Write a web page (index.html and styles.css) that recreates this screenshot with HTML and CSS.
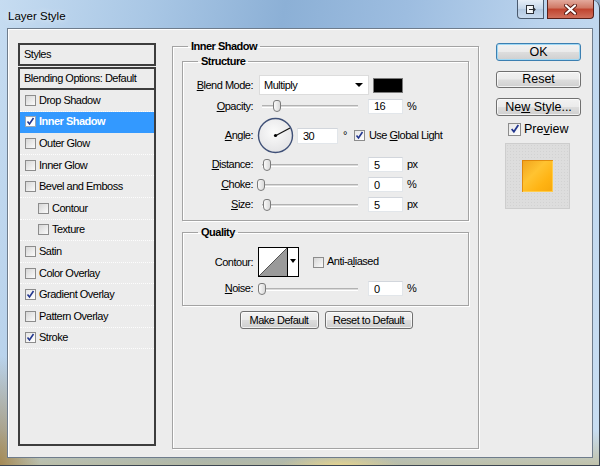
FILE: index.html
```html
<!DOCTYPE html>
<html>
<head>
<meta charset="utf-8">
<link rel="stylesheet" href="styles.css">
</head>
<body>
<div class="window">
    <div class="titlebar">
        <span class="title">Layer Style</span>
        <div class="caption">
            <span class="cap-btn cap-extra">
                <svg width="12" height="11" viewBox="0 0 12 11"><rect x="1.5" y="1.5" width="7" height="8" fill="#f4f6f8" stroke="#2b2f36"/><path d="M4 5.5h6M8 3.5l2 2-2 2" fill="none" stroke="#2b2f36" stroke-width="1.2"/></svg>
            </span>
            <span class="cap-btn cap-close">
                <svg width="13" height="11" viewBox="0 0 13 11"><path d="M2 1.5l9 8M11 1.5l-9 8" stroke="#5a1a12" stroke-width="4" stroke-linecap="round"/><path d="M2 1.5l9 8M11 1.5l-9 8" stroke="#fff" stroke-width="2.2" stroke-linecap="round"/></svg>
            </span>
        </div>
    </div>
    <div class="client">
        <div class="styles-panel">
            <div class="panel-head">Styles</div>
            <div class="panel-blend">Blending Options: Default</div>
            <ul class="style-list">
                <li><span class="cb"></span>Drop Shadow</li>
                <li class="z-selected"><span class="cb on"><svg width="9" height="9" viewBox="0 0 9 9"><path d="M1.5 4.5l2 2.5 4-6" fill="none" stroke="#23378f" stroke-width="1.6"/></svg></span>Inner Shadow</li>
                <li><span class="cb"></span>Outer Glow</li>
                <li><span class="cb"></span>Inner Glow</li>
                <li><span class="cb"></span>Bevel and Emboss</li>
                <li class="sub"><span class="cb"></span>Contour</li>
                <li class="sub"><span class="cb"></span>Texture</li>
                <li><span class="cb"></span>Satin</li>
                <li><span class="cb"></span>Color Overlay</li>
                <li><span class="cb on"><svg width="9" height="9" viewBox="0 0 9 9"><path d="M1.5 4.5l2 2.5 4-6" fill="none" stroke="#23378f" stroke-width="1.6"/></svg></span>Gradient Overlay</li>
                <li><span class="cb"></span>Pattern Overlay</li>
                <li><span class="cb on"><svg width="9" height="9" viewBox="0 0 9 9"><path d="M1.5 4.5l2 2.5 4-6" fill="none" stroke="#23378f" stroke-width="1.6"/></svg></span>Stroke</li>
            </ul>
        </div>

        <fieldset class="group g-main">
            <legend>Inner Shadow</legend>

            <fieldset class="group g-sub g-structure">
                <legend>Structure</legend>
                <div class="row row-blend">
                    <label class="lbl"><u>B</u>lend Mode:</label>
                    <div class="select">Multiply<span class="arrow"></span></div>
                    <span class="swatch"></span>
                </div>
                <div class="row">
                    <label class="lbl"><u>O</u>pacity:</label>
                    <div class="slider"><span class="track"></span><span class="thumb" style="left:16px"></span></div>
                    <input class="num" type="text" value="16">
                    <span class="unit">%</span>
                </div>
                <div class="row row-angle">
                    <label class="lbl"><u>A</u>ngle:</label>
                    <svg class="dial" width="37" height="37" viewBox="0 0 37 37">
                        <defs><radialGradient id="dialFill" cx="45%" cy="40%" r="60%"><stop offset="0" stop-color="#fbfbfb"/><stop offset="1" stop-color="#e4e4e6"/></radialGradient></defs>
                        <circle cx="18.5" cy="18.5" r="17" fill="url(#dialFill)" stroke="#3f5077" stroke-width="1.4"/>
                        <line x1="19" y1="18.5" x2="33" y2="11" stroke="#111" stroke-width="1.2"/>
                        <circle cx="18.5" cy="18.5" r="1.6" fill="#000"/>
                    </svg>
                    <input class="num num-angle" type="text" value="30">
                    <span class="deg">°</span>
                    <span class="cb on cb-global"><svg width="9" height="9" viewBox="0 0 9 9"><path d="M1.5 4.5l2 2.5 4-6" fill="none" stroke="#23378f" stroke-width="1.6"/></svg></span>
                    <span class="cb-text">Use <u>G</u>lobal Light</span>
                </div>
                <div class="row">
                    <label class="lbl"><u>D</u>istance:</label>
                    <div class="slider"><span class="track"></span><span class="thumb" style="left:6px"></span></div>
                    <input class="num" type="text" value="5">
                    <span class="unit">px</span>
                </div>
                <div class="row">
                    <label class="lbl"><u>C</u>hoke:</label>
                    <div class="slider"><span class="track"></span><span class="thumb" style="left:0px"></span></div>
                    <input class="num" type="text" value="0">
                    <span class="unit">%</span>
                </div>
                <div class="row">
                    <label class="lbl"><u>S</u>ize:</label>
                    <div class="slider"><span class="track"></span><span class="thumb" style="left:6px"></span></div>
                    <input class="num" type="text" value="5">
                    <span class="unit">px</span>
                </div>
            </fieldset>

            <fieldset class="group g-sub g-quality">
                <legend>Quality</legend>
                <div class="row row-contour">
                    <label class="lbl">Contour:</label>
                    <div class="contour">
                        <svg width="28" height="28" viewBox="0 0 28 28"><rect width="28" height="28" fill="#fff"/><path d="M0 28L28 0V28Z" fill="#9a9a9a"/><path d="M0 28L28 0" stroke="#555" stroke-width="1"/></svg>
                        <span class="contour-drop"><span class="arrow"></span></span>
                    </div>
                    <span class="cb cb-aa"></span>
                    <span class="cb-text">Anti-a<u>l</u>iased</span>
                </div>
                <div class="row row-noise">
                    <label class="lbl"><u>N</u>oise:</label>
                    <div class="slider"><span class="track"></span><span class="thumb" style="left:1px"></span></div>
                    <input class="num" type="text" value="0">
                    <span class="unit">%</span>
                </div>
            </fieldset>

            <div class="defaults">
                <button class="btn btn-small">Make Default</button>
                <button class="btn btn-small">Reset to Default</button>
            </div>
        </fieldset>

        <div class="actions">
            <button class="btn btn-main z-focus">OK</button>
            <button class="btn btn-main btn-reset">Reset</button>
            <button class="btn btn-main">Ne<u>w</u> Style...</button>
            <div class="preview-row">
                <span class="cb on cb-preview"><svg width="10" height="10" viewBox="0 0 9 9"><path d="M1.5 4.5l2 2.5 4-6" fill="none" stroke="#23378f" stroke-width="1.6"/></svg></span>
                <span>Pre<u>v</u>iew</span>
            </div>
            <div class="preview-box"><span class="preview-chip"></span></div>
        </div>
    </div>
</div>
</body>
</html>
```

FILE: styles.css
```css
body {margin: 0; background: #8aa8c8; font: 11px/13px "Liberation Sans", Arial, sans-serif; letter-spacing: -0.5px; color: #000;}
u {text-decoration: underline;}

/* window frame */
.window {box-sizing: border-box; width: 600px; height: 466px; padding: 0 6px 7px 7px; display: flex; flex-direction: column;
    border-right: 1px solid #3d4652; border-bottom: 1px solid #3d4652; border-top-right-radius: 8px;
    background:
        radial-gradient(ellipse 40px 110px at 0 466px, rgba(160,128,70,.85), rgba(160,128,70,0)),
        radial-gradient(ellipse 60px 12px at 340px 466px, rgba(235,215,140,.9), rgba(235,215,140,0)),
        linear-gradient(to bottom, rgba(200,196,160,0) 430px, rgba(190,186,150,.8) 466px),
        linear-gradient(100deg, #c6dcf1 0%, #a9c7e5 22%, #8cb0d6 42%, #9dbde0 60%, #bad3ed 80%, #c9def2 100%);}
.titlebar {height: 28px; display: flex; align-items: flex-start; flex: none;}
.title {padding: 9px 0 0 1px; font-size: 11.5px; line-height: 14px; letter-spacing: 0; text-shadow: 0 0 6px rgba(255,255,255,.9);}
.caption {margin-left: auto; margin-right: -1px; display: flex; gap: 3px;}
.cap-btn {box-sizing: border-box; height: 19px; display: flex; align-items: center; justify-content: center; border: 1px solid #4a5a6e; border-top: 0;}
.cap-extra {width: 27px; border-radius: 0 0 0 4px; background: linear-gradient(#e6eef7, #c4d6ea 50%, #b2c8e0 51%, #c8daee);}
.cap-close {width: 47px; border-color: #5a1f18; border-radius: 0 0 4px 0; background: linear-gradient(#e3a99c, #cf7764 45%, #c0432e 50%, #d0705c 100%);}

.client {flex: 1; display: flex; align-items: flex-start; padding: 14px 0 0 10px; background: #ececec; border: 1px solid #6e7c8c; box-shadow: inset 1px 1px 0 #fff;}

/* left list */
.styles-panel {width: 138px; flex: none; display: flex; flex-direction: column;}
.panel-head, .panel-blend {box-sizing: border-box; height: 23px; border: 2px solid #3d3d3d; padding-left: 4px; line-height: 19px;}
.panel-blend {margin-top: 1px;}
.style-list {box-sizing: border-box; height: 356px; margin: 0; padding: 0; list-style: none; border: 2px solid #3d3d3d; border-top: 0;}
.style-list > li {box-sizing: border-box; height: 21.6px; display: flex; align-items: center; padding-left: 5px; border-bottom: 1px dotted #fdfdfd;}
.style-list > li.sub {padding-left: 18px;}
.style-list > li.z-selected {background: #3399ff; color: #fff; font-weight: bold; border-bottom-color: #3399ff;}
.style-list .cb {margin-right: 3px;}

.cb {box-sizing: border-box; width: 11px; height: 11px; flex: none; display: inline-flex; align-items: center; justify-content: center; border: 1px solid #8c8c8c; background: linear-gradient(135deg, #d6d6d6, #fbfbfb);}
.cb.on {background: linear-gradient(135deg, #e6e6e6, #ffffff);}
.z-selected .cb {background: #fff; border-color: #9aa6b5;}

/* group boxes */
.group {box-sizing: border-box; margin: 0; min-width: 0; border: 1px solid #a3a3a3; box-shadow: 1px 1px 0 #fff, inset 1px 1px 0 #fff;}
.group > legend {padding: 0 3px; font-weight: bold; line-height: 13px;}
.g-main {width: 307px; height: 409px; margin: -3.5px 0 0 16px; padding: 2px 9px 0 9px; flex: none;}
.g-main > legend {margin-left: 6px;}
.g-sub {width: 287px; padding: 7px 0 5px 0;}
.g-sub > legend {margin-left: 15px;}
.g-quality {margin-top: 5px; padding: 8.5px 0 6px 0;}

.row {display: flex; align-items: center; height: 20px;}
.row-blend {height: 21px;}
.row:nth-of-type(2) {height: 21px;}
.row-angle {height: 38px;}
.row-contour {height: 30px;}
.row-noise {margin-top: 1px;}
.lbl {width: 70px; flex: none; text-align: right;}

.select {box-sizing: border-box; width: 110px; height: 20px; margin-left: 6px; display: flex; align-items: center; padding-left: 4px; background: #fff; border: 1px solid #dcdcdc;}
.arrow {width: 0; height: 0; border-left: 4px solid transparent; border-right: 4px solid transparent; border-top: 4px solid #000;}
.select .arrow {margin-left: auto; margin-right: 5px;}
.swatch {box-sizing: border-box; width: 30px; height: 15px; margin-left: 4px; background: #000; border: 1px solid #7a7a7a;}

.slider {position: relative; width: 101px; height: 14px; margin-left: 4px; flex: none;}
.slider .track {position: absolute; left: 5px; right: 0; top: 6px; height: 1px; background: #dadada; border-top: 1px solid #b2b2b2; border-bottom: 1px solid #fff;}
.slider .thumb {position: absolute; top: 1px; box-sizing: border-box; width: 8px; height: 12px; border: 1px solid #7b7b7b; border-radius: 3px 3px 4px 4px; background: linear-gradient(90deg, #fafafa, #d9d9d9);}

.num {box-sizing: border-box; width: 35px; height: 15px; margin: 0 0 0 10px; padding: 0 0 0 5px; font: inherit; letter-spacing: inherit; color: #000; background: #fff; border: 1px solid #e2e6ea; border-top-color: #d2d6dc; outline: none;}
.unit {margin-left: 4px;}

.dial {margin-left: 4px; flex: none;}
.num-angle {width: 41px; height: 16px; margin-left: 3px;}
.deg {margin-left: 5px; align-self: flex-start; margin-top: 12px;}
.cb-global {margin-left: 7px;}
.cb-text {margin-left: 4px;}

.contour {box-sizing: border-box; width: 41px; height: 30px; margin-left: 5px; display: flex; border: 1px solid #000; background: #fff;}
.contour svg {display: block;}
.contour-drop {flex: 1; display: flex; align-items: center; justify-content: center; border-left: 1px solid #000;}
.contour-drop .arrow {border-width: 4px 3px 0 3px; margin-top: -2px;}
.cb-aa {margin-left: 14px;}
.row-contour .cb-text {margin-left: 3px; margin-top: -2px;}

/* buttons */
.btn {box-sizing: border-box; margin: 0; padding: 0; font: inherit; letter-spacing: inherit; color: #000; border: 1px solid #707070; border-radius: 3px;
    background: linear-gradient(#f2f2f2 0%, #ebebeb 48%, #dddddd 52%, #cfcfcf 100%); box-shadow: inset 0 0 0 1px rgba(255,255,255,.7);}
.defaults {display: flex; justify-content: center; gap: 6px; margin-top: 5px; padding-left: 1px;}
.btn-small {height: 18px;}
.btn-small:first-child {width: 79px;}
.btn-small:last-child {width: 88px;}

.actions {width: 85px; margin-left: 17px; flex: none; display: flex; flex-direction: column; font-size: 12.5px; line-height: 15px; letter-spacing: 0;}
.btn-main {height: 18px; font-size: 12.5px;}
.btn-main + .btn-main {margin-top: 10px;}
.btn-reset {height: 17px;}
.z-focus {border-color: #3c7fb1; box-shadow: inset 0 0 0 1px #9fd8f4;}
.preview-row {display: flex; align-items: center; height: 18px; margin-top: 4px; padding-left: 12px;}
.cb-preview {width: 13px; height: 13px; margin-right: 3px;}
.preview-box {box-sizing: border-box; width: 65px; height: 66px; margin: 5px 0 0 9px; display: flex; align-items: center; justify-content: center;
    border: 1px solid #cdcdcd; background: #dddddd; background-image: radial-gradient(#d2d2d2 0.6px, transparent 0.8px); background-size: 3px 3px;}
.preview-chip {width: 31px; height: 32px; background: linear-gradient(135deg, #f0a21c 0%, #ffc331 40%, #ffb414 70%, #f7a70a 100%); box-shadow: inset 1px 1px 0 rgba(214,120,0,.7), inset -1px -1px 0 rgba(255,210,90,.8);}
```
